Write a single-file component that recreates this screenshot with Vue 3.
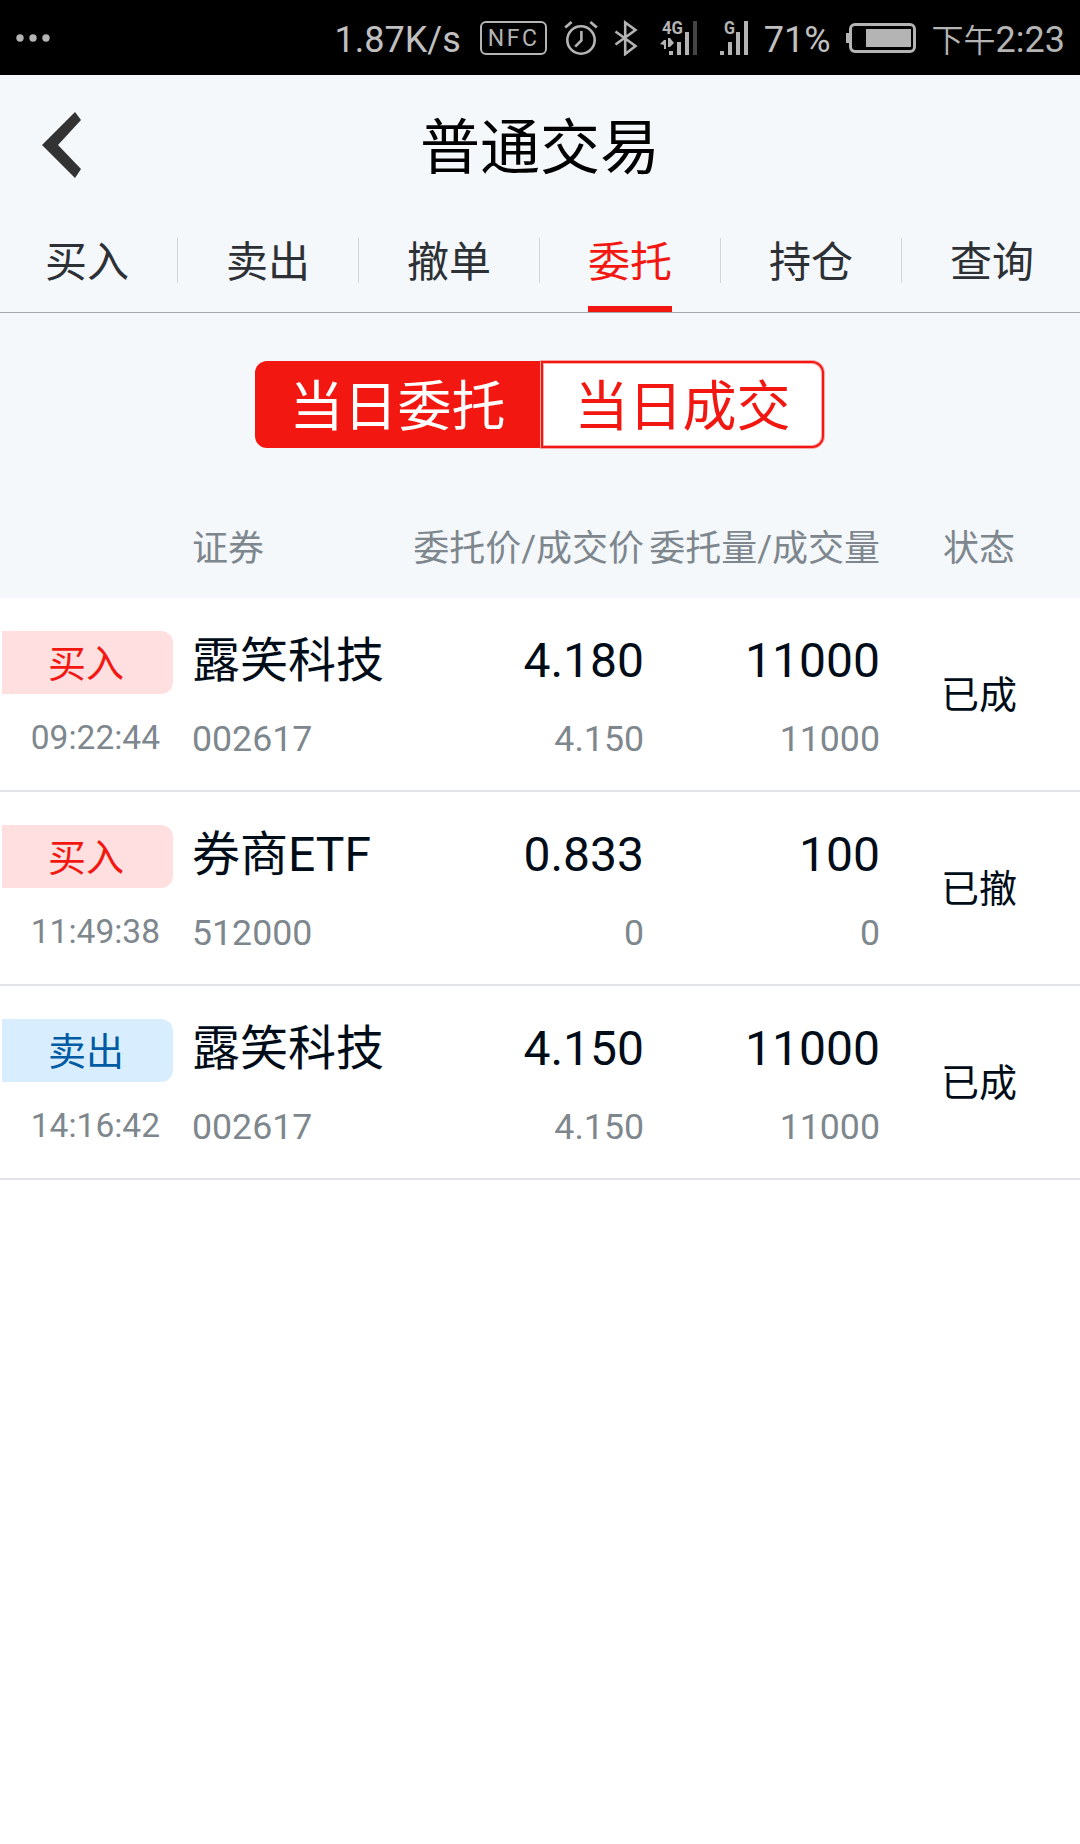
<template>
  <div class="page">
    <div class="status-bar">
      <svg class="dots" width="34" height="8" viewBox="0 0 34 8">
        <circle cx="4" cy="4" r="3.7" />
        <circle cx="17" cy="4" r="3.7" />
        <circle cx="30" cy="4" r="3.7" />
      </svg>
      <span class="speed">1.87K/s</span>
      <span class="nfc">NFC</span>
      <svg class="alarm" width="34" height="36" viewBox="0 0 34 36" fill="none" stroke="#b4b4b4">
        <circle cx="17" cy="20" r="13.7" stroke-width="2.6" />
        <path d="M17.4 11v9.5l-6.2 6.2" stroke-width="2.6" />
        <path d="M1.2 7.5 7.6 2M32.8 7.5 26.4 2" stroke-width="2.8" />
      </svg>
      <svg class="bluetooth" width="24" height="36" viewBox="0 0 24 36" fill="none" stroke="#b4b4b4" stroke-width="2.6">
        <path d="M1.5 11.5 21.5 26 11.2 34V2.5L21.5 10 1.5 24.5" />
      </svg>
      <svg class="signal-4g" width="38" height="46" viewBox="0 -5 38 46" fill="#b4b4b4">
        <text x="2" y="13.5" font-family="Roboto" font-size="18" font-weight="700" textLength="21" lengthAdjust="spacingAndGlyphs">4G</text>
        <path d="M9 31h4v4H9zM17 22h4v13h-4zM25 12h4v23h-4z" />
        <path d="M33 1h4v34h-4z" fill="#444" />
        <path d="M0 24l4-4h2v9H4v-4zM14 23l-4 4H8v-9h2z" />
      </svg>
      <svg class="signal-g" width="30" height="46" viewBox="0 -5 30 46" fill="#b4b4b4">
        <text x="5" y="13.5" font-family="Roboto" font-size="18" font-weight="700" textLength="11" lengthAdjust="spacingAndGlyphs">G</text>
        <path d="M1 31h4v4H1zM9 22h4v13H9zM17 12h4v23h-4zM25 1h4v34h-4z" />
      </svg>
      <span class="percent">71%</span>
      <svg class="battery" width="70" height="30" viewBox="0 0 70 30">
        <rect x="0" y="10" width="4" height="10" fill="#b4b4b4" />
        <rect x="4.500" y="1.500" width="64" height="27" rx="4.500" fill="none" stroke="#b4b4b4" stroke-width="3" />
        <rect x="20" y="6" width="45" height="18" fill="#b4b4b4" />
      </svg>
      <span class="clock"><span class="period">下午</span>2:23</span>
    </div>

    <div class="header">
      <svg class="back" width="40" height="68" viewBox="0 0 40 68">
        <path d="M0 34 33 1l6 8-23 25 23 24-6 9z" fill="#333" />
      </svg>
      <h1>普通交易</h1>
    </div>

    <div class="tabs">
      <template v-for="(tab, i) in tabs" :key="tab">
        <i v-if="i > 0" class="divider"></i>
        <div class="tab" :class="{ active: tab === currentTab }" @click="currentTab = tab">{{ tab }}</div>
      </template>
    </div>

    <div class="switch">
      <button
        v-for="item in switches"
        :key="item"
        :class="{ on: item === currentSwitch }"
        @click="currentSwitch = item"
      >{{ item }}</button>
    </div>

    <div class="table-head">
      <div class="name">证券</div>
      <div class="price">委托价/成交价</div>
      <div class="amount">委托量/成交量</div>
      <div class="state">状态</div>
    </div>

    <div class="row" v-for="order in orders" :key="order.time">
      <div class="side">
        <div class="badge" :class="order.type">{{ order.type === 'buy' ? '买入' : '卖出' }}</div>
        <div class="time">{{ order.time }}</div>
      </div>
      <div class="name">
        <div class="main">{{ order.name }}</div>
        <div class="sub">{{ order.code }}</div>
      </div>
      <div class="price">
        <div class="main">{{ order.price }}</div>
        <div class="sub">{{ order.dealPrice }}</div>
      </div>
      <div class="amount">
        <div class="main">{{ order.amount }}</div>
        <div class="sub">{{ order.dealAmount }}</div>
      </div>
      <div class="state">{{ order.state }}</div>
    </div>
  </div>
</template>

<script setup>
import { ref } from 'vue';

const tabs = ['买入', '卖出', '撤单', '委托', '持仓', '查询'];
const currentTab = ref('委托');

const switches = ['当日委托', '当日成交'];
const currentSwitch = ref('当日委托');

const orders = ref([
  { type: 'buy', time: '09:22:44', name: '露笑科技', code: '002617', price: '4.180', dealPrice: '4.150', amount: '11000', dealAmount: '11000', state: '已成' },
  { type: 'buy', time: '11:49:38', name: '券商ETF', code: '512000', price: '0.833', dealPrice: '0', amount: '100', dealAmount: '0', state: '已撤' },
  { type: 'sell', time: '14:16:42', name: '露笑科技', code: '002617', price: '4.150', dealPrice: '4.150', amount: '11000', dealAmount: '11000', state: '已成' },
]);
</script>

<style>
body {
  background: #fff;
}
</style>

<style scoped>
.page {
  width: 1080px;
  min-height: 1844px;
  background: #fff;
  font-family: Roboto, "Noto Sans CJK SC", sans-serif;
  color: #000d19;
}

/* 状态栏 */
.status-bar {
  display: flex;
  align-items: center;
  box-sizing: border-box;
  height: 75px;
  padding: 0 15px 0 16px;
  background: #000;
  color: #b4b4b4;
  font-size: 36px;
  line-height: 75px;
  white-space: nowrap;
}
.dots {
  fill: #b4b4b4;
}
.speed {
  margin-left: auto;
  padding-top: 6px;
  color: #c0c0c0;
}
.nfc {
  box-sizing: border-box;
  width: 67px;
  height: 34px;
  margin-left: 19px;
  padding-left: 6px;
  border: 2.500px solid #b4b4b4;
  border-radius: 6px;
  font-size: 23px;
  line-height: 31px;
  letter-spacing: 2.600px;
}
.alarm {
  margin-left: 17px;
}
.bluetooth {
  margin-left: 16px;
}
.signal-4g {
  margin-left: 22px;
}
.signal-g {
  margin-left: 21px;
}
.percent {
  margin-left: 15px;
  padding-top: 6px;
  color: #c0c0c0;
}
.battery {
  margin-left: 15px;
}
.clock {
  margin-left: 16px;
  padding-top: 6px;
}
.period {
  font-size: 32px;
  font-weight: 350;
}

/* 标题 */
.header {
  display: flex;
  align-items: center;
  height: 143px;
  padding: 0 42px;
  background: #f4f8fb;
}
.back {
  flex: none;
  margin-bottom: 3px;
}
h1 {
  flex: 1;
  margin: 4px 40px 0 0;
  color: #000;
  font-size: 60px;
  font-weight: 400;
  line-height: 143px;
  text-align: center;
}

/* 菜单 */
.tabs {
  display: flex;
  justify-content: space-between;
  align-items: flex-start;
  box-sizing: border-box;
  height: 95px;
  padding: 0 46px 0 45px;
  border-bottom: 1px solid #a5abb0;
  background: #f4f8fb;
}
.tab {
  height: 88px;
  border-bottom: 6px solid transparent;
  color: #2d3135;
  font-size: 42px;
  line-height: 90px;
}
.tab.active {
  border-bottom-color: #f31712;
  color: #f31712;
}
.divider {
  width: 1px;
  height: 45px;
  margin-top: 20px;
  background: #d3d7da;
}

/* 委托、成交切换 */
.switch {
  display: flex;
  justify-content: center;
  padding: 48px 0 60px;
  background: #f4f8fb;
}
.switch button {
  box-sizing: border-box;
  width: 285px;
  height: 87px;
  padding: 3px 0 0;
  border: 2px solid #f31712;
  background: #fff;
  color: #f31712;
  font-family: inherit;
  font-size: 54px;
  line-height: 83px;
}
.switch button:first-child {
  border-radius: 12px 0 0 12px;
}
.switch button:last-child {
  width: 283px;
  margin: 0 1px;
  border-radius: 0 12px 12px 0;
  box-shadow: 0 0 0 1px rgba(243, 23, 18, 0.35), inset 0 0 0 1px rgba(243, 23, 18, 0.35);
}
.switch .on {
  background: #f31712;
  color: #fff;
}

/* 列表 */
.table-head {
  display: flex;
  height: 90px;
  padding-left: 192px;
  background: #f4f8fb;
  color: #7e878d;
  font-size: 36px;
  line-height: 82px;
  white-space: nowrap;
}
.row {
  display: flex;
  box-sizing: border-box;
  height: 194px;
  padding-top: 33px;
  border-bottom: 2px solid #e2e3e8;
}
.side {
  width: 192px;
}
.name {
  width: 216px;
}
.price {
  width: 236px;
  text-align: right;
}
.amount {
  width: 236px;
  text-align: right;
}
.state {
  width: 198px;
  text-align: center;
}
.row .state {
  font-size: 38px;
  line-height: 128px;
}
.badge {
  width: 171px;
  height: 63px;
  margin: 0 0 24px 1.500px;
  border-radius: 0 12px 12px 0;
  font-size: 38px;
  line-height: 67px;
  text-indent: -2px;
  text-align: center;
}
.buy {
  background: #ffdfe0;
  color: #f31712;
}
.sell {
  background: #d8eeff;
  color: #005ba3;
}
.time {
  width: 160px;
  color: #7e878d;
  font-size: 33.500px;
  line-height: 39px;
  text-align: right;
}
.main {
  margin-bottom: 27px;
  font-size: 48px;
  line-height: 60px;
}
.sub {
  color: #7e878d;
  font-size: 35.700px;
  line-height: 42px;
}
</style>
